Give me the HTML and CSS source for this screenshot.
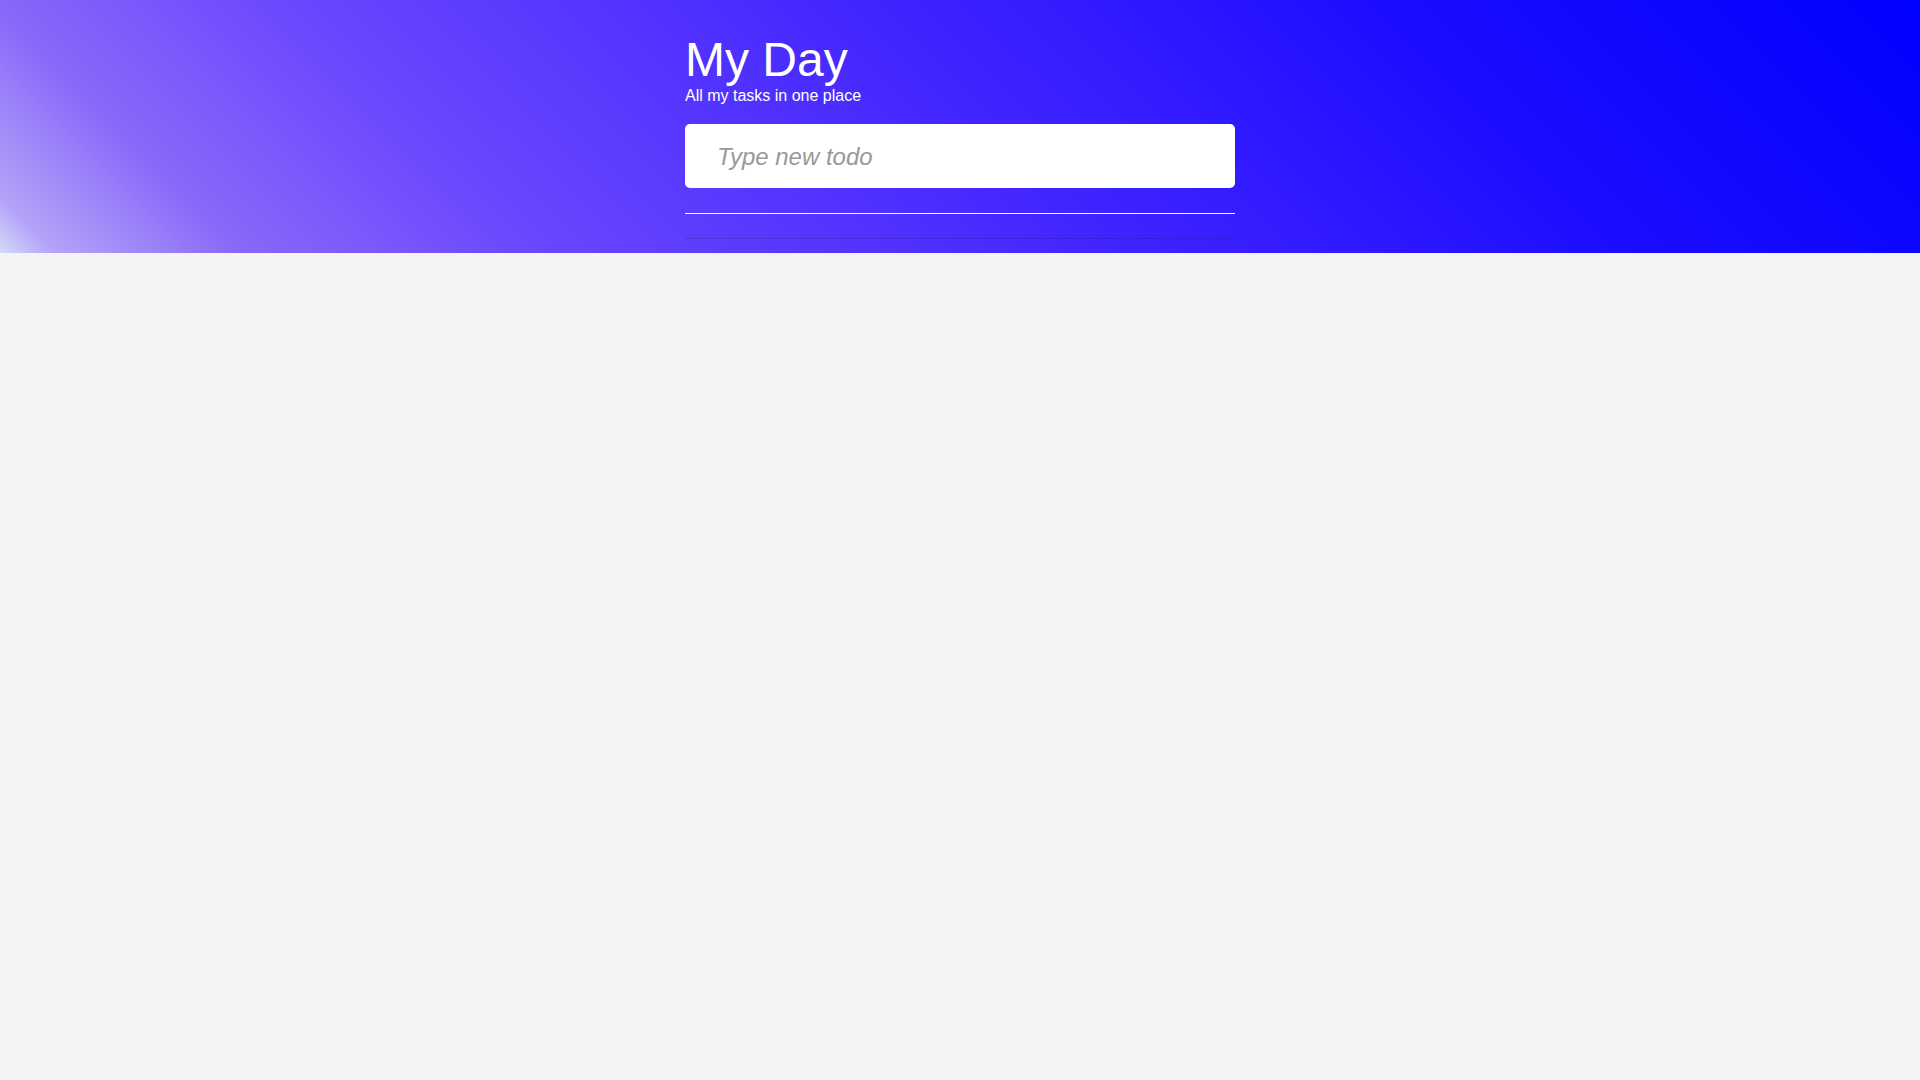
FILE: index.html
```html
<!DOCTYPE html>
<html lang="en">
<head>
    <meta charset="UTF-8">
    <meta name="viewport" content="width=device-width, initial-scale=1.0">
    <title>My Day</title>
    <link rel="stylesheet" href="styles.css">
</head>
<body>
    <header class="hero">
        <div class="container">
            <h1 class="title">My Day</h1>
            <p class="subtitle">All my tasks in one place</p>

            <form class="new-todo">
                <input type="text" class="new-todo-input" placeholder="Type new todo">
            </form>

            <ul class="todo-list"></ul>
            <div class="todo-footer"></div>
        </div>
    </header>
</body>
</html>
```

FILE: styles.css
```css
body {
    margin: 0;
    background: #f4f4f4;
    font-family: 'Liberation Sans', Arial, sans-serif;
    min-height: 100vh;
}

.hero {
    background: linear-gradient(45deg, #d4dcf8 0%, #b4a4f8 2.5%, #a28cf8 6%, #8a68f8 11%, #6a46fe 25%, #4024ff 52%, #1c0cff 75%, #0000ff 100%);
    padding: 36px 0 14px;
    color: #fff;
}

.container {
    width: 550px;
    margin: 0 auto;
}

.title {
    margin: 0;
    font-size: 48px;
    font-weight: normal;
    line-height: 48px;
}

.subtitle {
    margin: 3px 0 0;
    font-size: 16px;
    line-height: 18px;
}

.new-todo {
    margin: 19px 0 0;
}

.new-todo-input {
    display: block;
    box-sizing: border-box;
    width: 100%;
    height: 64px;
    padding: 2px 20px 0 32px;
    border: none;
    border-radius: 5px;
    background: #fff;
    font-family: inherit;
    font-size: 24px;
    color: #333;
    outline: none;
}

.new-todo-input::placeholder {
    color: #999;
    font-style: italic;
}

.todo-list {
    list-style: none;
    margin: 25px 0 0;
    padding: 0;
    border-top: 1px solid rgba(255, 255, 255, 0.95);
    height: 24px;
}

.todo-footer {
    border-top: 1px solid rgba(0, 0, 0, 0.12);
}
```
